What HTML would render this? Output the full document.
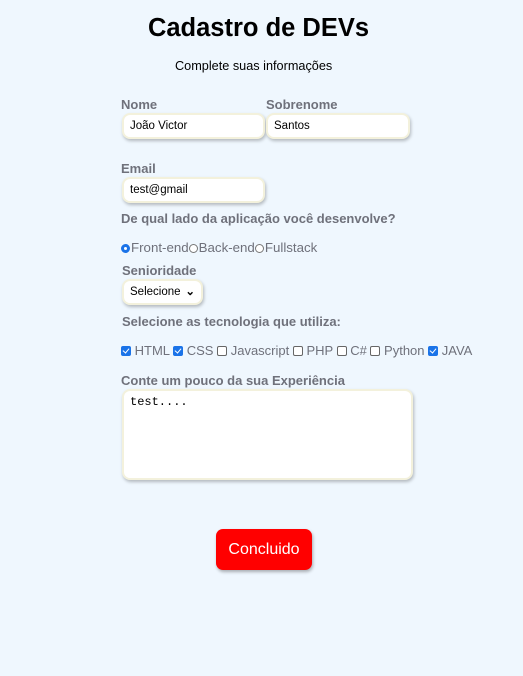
<!DOCTYPE html>
<html><head><meta charset="utf-8"><style>
body{margin:0;width:523px;height:676px;background:#eff7fe;font-family:"Liberation Sans",Arial,sans-serif;position:relative;overflow:hidden}
.a{position:absolute;white-space:nowrap}
.lab{color:#6f717b;font-weight:bold;font-size:13px}
.inp{position:absolute;background:#fff;border:2px solid #f3f1dc;border-radius:8px;box-shadow:1px 2px 3px rgba(0,0,0,.25);font-size:11.5px;color:#000;box-sizing:border-box;padding-left:6px;line-height:22px}
.opt{color:#6f717b;font-size:13.5px}
.cb{display:inline-block;width:10px;height:10px;border-radius:2px;vertical-align:-1px;box-sizing:border-box}
.on{background:#1a73e8;position:relative}
.on:after{content:"";position:absolute;left:3px;top:1px;width:3px;height:5px;border:solid #fff;border-width:0 1.5px 1.5px 0;transform:rotate(40deg)}
.off{border:1px solid #666;background:#fff}
.rd{display:inline-block;width:9px;height:9px;border-radius:50%;box-sizing:border-box;border:1px solid #777;vertical-align:-1px;background:#fff;margin-right:1px}
</style></head><body>
<div class="a" style="left:0;width:517px;text-align:center;top:14px;font-size:25.5px;font-weight:bold;color:#000">Cadastro de DEVs</div>
<div class="a" style="left:175px;top:59px;font-size:12.7px;color:#000">Complete suas informações</div>
<div class="a lab" style="left:121px;top:97px">Nome</div>
<div class="a lab" style="left:266px;top:97px">Sobrenome</div>
<div class="inp" style="left:122px;top:113px;width:143px;height:26px">João Victor</div>
<div class="inp" style="left:266px;top:113px;width:144px;height:26px">Santos</div>
<div class="a lab" style="left:121px;top:161px">Email</div>
<div class="inp" style="left:122px;top:177px;width:143px;height:26px">test@gmail</div>
<div class="a lab" style="left:121px;top:211px">De qual lado da aplicação você desenvolve?</div>
<div class="a opt" style="left:121px;top:240px;font-size:13.3px"><span class="rd" style="border:3px solid #1a73e8;background:#fff"></span>Front-end<span class="rd"></span>Back-end<span class="rd"></span>Fullstack</div>
<div class="a lab" style="left:122px;top:263px">Senioridade</div>
<div class="inp" style="left:122px;top:279px;width:81px;height:26px;font-size:11.5px">Selecione <span style="position:absolute;right:6px;top:0;font-weight:bold">⌄</span></div>
<div class="a lab" style="left:122px;top:314px">Selecione as tecnologia que utiliza:</div>
<div class="a opt" style="left:121px;top:343px;font-size:13px"><span class="cb on"></span> HTML <span class="cb on"></span> CSS <span class="cb off"></span> Javascript <span class="cb off"></span> PHP <span class="cb off"></span> C# <span class="cb off"></span> Python <span class="cb on"></span> JAVA</div>
<div class="a lab" style="left:121px;top:373px">Conte um pouco da sua Experiência</div>
<div class="inp" style="left:122px;top:389px;width:291px;height:91px;font-family:'Liberation Mono',monospace;font-size:12px;line-height:14px;padding-top:4px">test....</div>
<div class="a" style="left:216px;top:529px;width:96px;height:41px;background:#ff0000;border-radius:7px;box-shadow:1px 2px 3px rgba(0,0,0,.3);color:#fff;font-size:16px;text-align:center;line-height:41px">Concluido</div>
</body></html>
